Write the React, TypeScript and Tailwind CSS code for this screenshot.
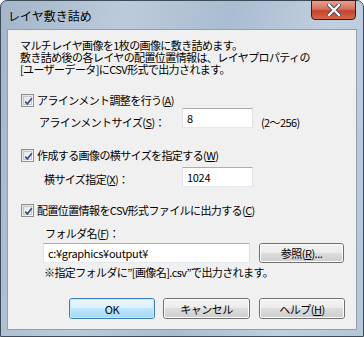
import React from "react";

const font = { fontFamily: '"Noto Sans CJK JP", "Noto Sans", sans-serif' };

function CheckBox() {
  return (
    <div className="w-[13px] h-[13px] border border-[#8e8f8f] bg-[linear-gradient(135deg,#dcdcdc,#ffffff)] p-[1px] shrink-0">
      <div className="w-full h-full border border-[#c6c6c6] bg-[linear-gradient(135deg,#e5e5e5,#fdfdfd)] relative">
        <svg viewBox="0 0 9 9" className="absolute left-[0px] top-[0px] w-[9px] h-[9px]">
          <path d="M1.2 4.6 L3.4 6.9 L7.8 1.3" fill="none" stroke="#3a4f8f" strokeWidth="1.7" />
        </svg>
      </div>
    </div>
  );
}

function Input({ value, className }: { value: string; className: string }) {
  return (
    <div
      className={`h-[20px] bg-white border border-[#abadb3] border-r-[#dbdfe6] border-b-[#e3e9ef] border-l-[#e2e3ea] pl-[4px] flex items-center text-[11px] leading-[12px] tracking-[-0.3px] text-black ${className}`}
    >
      {value}
    </div>
  );
}

function Button({ children, def, className }: { children: React.ReactNode; def?: boolean; className: string }) {
  return (
    <div
      className={`rounded-[3px] border ${
        def ? "border-[#3c7fb1]" : "border-[#707070]"
      } ${className}`}
    >
      <div
        className={`h-full rounded-[2px] flex items-center justify-center text-[11px] leading-[12px] tracking-[-0.5px] text-black ${
          def
            ? "bg-[linear-gradient(#eaf6fd_0%,#d9f0fc_50%,#bee6fd_50%,#a7d9f5_100%)] border border-[#c5e8fb]"
            : "bg-[linear-gradient(#f2f2f2_0%,#ebebeb_50%,#dddddd_50%,#cfcfcf_100%)] border border-[#fcfcfc]"
        }`}
      >
        {children}
      </div>
    </div>
  );
}

export default function App() {
  return (
    <div style={font} className="w-[364px] h-[337px] overflow-hidden bg-white">
      <div className="relative w-[364px] h-[337px] rounded-t-[7px] border border-[#3e4c5a] bg-[linear-gradient(100deg,#a4b6cb_0%,#bccbdb_30%,#a9bcd1_55%,#c1d0df_80%,#b5c6d8_100%)] flex flex-col">
        {/* title bar */}
        <div className="h-[28px] flex items-center pl-[7px] text-[12px] leading-[12px] text-black">
          <span className="pt-[1px]">レイヤ敷き詰め</span>
        </div>
        <div className="absolute top-[-1px] right-[7px] w-[45px] h-[20px] rounded-b-[4px] border border-[#3d1a12] bg-[linear-gradient(#e8a08f_0%,#d3705c_45%,#c2432b_55%,#d6684e_100%)] flex items-center justify-center">
          <svg viewBox="0 0 14 12" className="w-[14px] h-[12px]">
            <path d="M2 1 L12 11 M12 1 L2 11" stroke="#3e4a5a" strokeWidth="4" strokeLinecap="square" />
            <path d="M2 1 L12 11 M12 1 L2 11" stroke="#ffffff" strokeWidth="2.2" strokeLinecap="square" />
          </svg>
        </div>
        {/* client area */}
        <div className="mx-[6px] h-[301px] border border-[#8c9fb3] bg-[#f0f0f0] flex flex-col text-[11px] leading-[12px] tracking-[-0.6px] text-black">
          <div className="mt-[9px] pl-[12px] leading-[12px]">
            <div>マルチレイヤ画像を1枚の画像に敷き詰めます。</div>
            <div>敷き詰め後の各レイヤの配置位置情報は、レイヤプロパティの</div>
            <div>[ユーザーデータ]にCSV形式で出力されます。</div>
          </div>
          <div className="mt-[17px] h-[16px] pl-[13px] flex items-center gap-[3px]">
            <CheckBox />
            <span>
              アラインメント調整を行う(<span className="underline">A</span>)
            </span>
          </div>
          <div className="h-[20px] flex items-start">
            <span className="ml-[31px] mt-[8px] w-[143px] whitespace-nowrap">
              アラインメントサイズ(<span className="underline">S</span>)：
            </span>
            <Input value="8" className="w-[71px]" />
            <span className="ml-[8px] mt-[8px]">(2～256)</span>
          </div>
          <div className="mt-[19px] h-[16px] pl-[13px] flex items-center gap-[3px]">
            <CheckBox />
            <span>
              作成する画像の横サイズを指定する(<span className="underline">W</span>)
            </span>
          </div>
          <div className="mt-[4px] h-[20px] flex items-start">
            <span className="ml-[36px] mt-[6px] w-[138px] whitespace-nowrap">
              横サイズ指定(<span className="underline">X</span>)：
            </span>
            <Input value="1024" className="w-[71px]" />
          </div>
          <div className="mt-[15px] h-[16px] pl-[13px] flex items-center gap-[3px]">
            <CheckBox />
            <span>
              配置位置情報をCSV形式ファイルに出力する(<span className="underline">C</span>)
            </span>
          </div>
          <div className="mt-[9px] pl-[37px]">
            フォルダ名(<span className="underline">F</span>)：
          </div>
          <div className="mt-[4px] flex items-center">
            <Input value="c:¥graphics¥output¥" className="ml-[35px] w-[207px]" />
            <Button className="ml-[9px] w-[85px] h-[20px]">
              参照(<span className="underline">R</span>)...
            </Button>
          </div>
          <div className="mt-[3px] pl-[36px]">※指定フォルダに”[画像名].csv”で出力されます。</div>
          <div className="mt-[20px] flex">
            <Button def className="ml-[61px] w-[86px] h-[21px]">
              OK
            </Button>
            <Button className="ml-[8px] w-[87px] h-[21px]">キャンセル</Button>
            <Button className="ml-[9px] w-[86px] h-[21px]">
              ヘルプ(<span className="underline">H</span>)
            </Button>
          </div>
        </div>
      </div>
    </div>
  );
}
